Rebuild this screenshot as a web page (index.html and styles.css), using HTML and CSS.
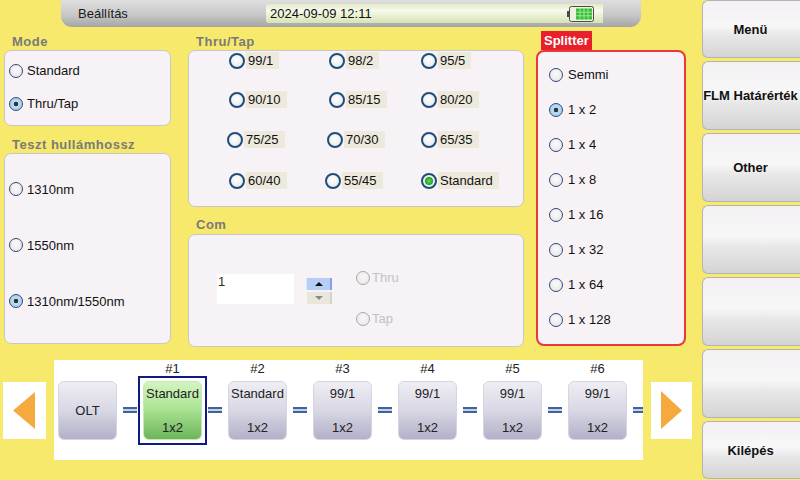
FILE: index.html
```html
<!DOCTYPE html>
<html>
<head>
<meta charset="utf-8">
<title>Beállítás</title>
<link rel="stylesheet" href="styles.css">
</head>
<body>
<div class="app">
  <div class="main">
    <div class="titlebar">
      <span class="title">Beállítás</span>
      <div class="datefield">
        <span>2024-09-09 12:11</span>
        <svg class="battery" width="28" height="16" viewBox="0 0 28 16">
          <rect x="1" y="5" width="2.5" height="6" fill="#4a4a4a"/>
          <rect x="3.5" y="0.5" width="24" height="15" rx="2" fill="#eef2dc" stroke="#4a4a4a"/>
          <rect x="10" y="2.5" width="16" height="11" fill="#34c034"/>
          <path d="M14 2.5V13.5M18 2.5V13.5M22 2.5V13.5M10 6.2H26M10 9.8H26" stroke="#b8ecb0" stroke-width="0.8"/>
        </svg>
      </div>
    </div>

    <div class="content">
      <div class="col col1">
        <div class="label">Mode</div>
        <div class="panel mode">
          <div class="opt"><span class="rb"></span>Standard</div>
          <div class="opt"><span class="rb on"></span>Thru/Tap</div>
        </div>
        <div class="label gap">Teszt hullámhossz</div>
        <div class="panel wave">
          <div class="opt"><span class="rb"></span>1310nm</div>
          <div class="opt"><span class="rb"></span>1550nm</div>
          <div class="opt"><span class="rb on"></span>1310nm/1550nm</div>
        </div>
      </div>

      <div class="col col2">
        <div class="label">Thru/Tap</div>
        <div class="panel ratios">
          <div class="ropt"><span class="rt"></span><span class="tx">99/1</span></div>
          <div class="ropt"><span class="rt"></span><span class="tx">98/2</span></div>
          <div class="ropt"><span class="rt"></span><span class="tx">95/5</span></div>
          <div class="ropt"><span class="rt"></span><span class="tx">90/10</span></div>
          <div class="ropt"><span class="rt"></span><span class="tx">85/15</span></div>
          <div class="ropt"><span class="rt"></span><span class="tx">80/20</span></div>
          <div class="ropt shift"><span class="rt"></span><span class="tx">75/25</span></div>
          <div class="ropt shift"><span class="rt"></span><span class="tx">70/30</span></div>
          <div class="ropt"><span class="rt"></span><span class="tx">65/35</span></div>
          <div class="ropt"><span class="rt"></span><span class="tx">60/40</span></div>
          <div class="ropt shift2"><span class="rt"></span><span class="tx">55/45</span></div>
          <div class="ropt"><span class="rt on"></span><span class="tx">Standard</span></div>
        </div>
        <div class="label com-label">Com</div>
        <div class="panel com">
          <div class="numfield">1</div>
          <div class="spin">
            <div class="spin-up"><span class="tri-up"></span></div>
            <div class="spin-down"><span class="tri-down"></span></div>
          </div>
          <div class="dis-opts">
            <div class="dopt"><span class="rb dis"></span>Thru</div>
            <div class="dopt"><span class="rb dis"></span>Tap</div>
          </div>
        </div>
      </div>

      <div class="col col3">
        <div class="splabel">Splitter</div>
        <div class="panel splitter">
          <div class="sopt"><span class="rb"></span>Semmi</div>
          <div class="sopt"><span class="rb on"></span>1 x 2</div>
          <div class="sopt"><span class="rb"></span>1 x 4</div>
          <div class="sopt"><span class="rb"></span>1 x 8</div>
          <div class="sopt"><span class="rb"></span>1 x 16</div>
          <div class="sopt"><span class="rb"></span>1 x 32</div>
          <div class="sopt"><span class="rb"></span>1 x 64</div>
          <div class="sopt"><span class="rb"></span>1 x 128</div>
        </div>
      </div>
    </div>

    <div class="chain">
      <div class="arrow left">
        <svg width="43" height="57" viewBox="0 0 43 57"><polygon points="10,28.5 32,10 32,47" fill="#f6a93f"/></svg>
      </div>
      <div class="track">
        <div class="node-col"><div class="nlabel"></div><div class="node single">OLT</div></div>
        <div class="link"></div>
        <div class="node-col"><div class="nlabel">#1</div><div class="selframe"><div class="node sel"><span>Standard</span><span>1x2</span></div></div></div>
        <div class="link"></div>
        <div class="node-col"><div class="nlabel">#2</div><div class="node"><span>Standard</span><span>1x2</span></div></div>
        <div class="link"></div>
        <div class="node-col"><div class="nlabel">#3</div><div class="node"><span>99/1</span><span>1x2</span></div></div>
        <div class="link"></div>
        <div class="node-col"><div class="nlabel">#4</div><div class="node"><span>99/1</span><span>1x2</span></div></div>
        <div class="link"></div>
        <div class="node-col"><div class="nlabel">#5</div><div class="node"><span>99/1</span><span>1x2</span></div></div>
        <div class="link"></div>
        <div class="node-col"><div class="nlabel">#6</div><div class="node"><span>99/1</span><span>1x2</span></div></div>
        <div class="link"></div>
      </div>
      <div class="arrow right">
        <svg width="41" height="57" viewBox="0 0 41 57"><polygon points="31,28.5 10,9 10,47" fill="#f6a93f"/></svg>
      </div>
    </div>
  </div>

  <div class="side">
    <div class="btn short">Menü</div>
    <div class="btn">FLM Határérték</div>
    <div class="btn">Other</div>
    <div class="btn"></div>
    <div class="btn"></div>
    <div class="btn"></div>
    <div class="btn short">Kilépés</div>
  </div>
</div>
</body>
</html>
```

FILE: styles.css
```css
* { box-sizing: border-box; margin: 0; padding: 0; }
html, body { width: 800px; height: 480px; overflow: hidden; }
body {
  background: #f6e96c;
  font-family: "Liberation Sans", Arial, sans-serif;
  font-size: 13px;
  color: #111;
}
.app { display: flex; height: 480px; }
.main { width: 702px; flex: none; display: flex; flex-direction: column; }

/* title bar */
.titlebar {
  margin-left: 61px;
  width: 580px;
  height: 27px;
  border-radius: 0 0 11px 11px;
  background: linear-gradient(#dedede, #c8c8c8 55%, #a4a4a4);
  display: flex;
  align-items: center;
  padding-left: 17px;
}
.title { flex: 1; color: #1a1a1a; }
.datefield {
  width: 337px;
  height: 19px;
  margin-right: 38px;
  border-radius: 3px 0 0 3px;
  background: linear-gradient(#e2ebc6, #f7faee 35%, #e7f0d0 65%, #d6e3b4);
  display: flex;
  align-items: center;
  justify-content: space-between;
  padding: 0 9px 0 4px;
}
.battery { display: block; }

/* content columns */
.content { display: flex; padding-left: 4px; height: 320px; }
.col { display: flex; flex-direction: column; padding-top: 7px; }
.col1 { width: 167px; }
.col2 { width: 336px; margin-left: 17px; }
.col3 { width: 150px; margin-left: 12px; padding-top: 4px; }

.label {
  height: 16px;
  line-height: 16px;
  font-weight: bold;
  color: #7a7a7a;
  padding-left: 8px;
  letter-spacing: 0.5px;
}
.label.gap { margin-top: 11px; }
.label.com-label { margin-top: 10px; }

.panel {
  background: #f6f2f6;
  border: 1px solid #c8c8c8;
  border-radius: 7px;
}

/* radios */
.rb {
  flex: none;
  width: 14px;
  height: 14px;
  border-radius: 50%;
  border: 1px solid #34457a;
  background: radial-gradient(circle at 50% 40%, #fbfbfb, #e2e2e2);
  margin-right: 4px;
}
.rb.on {
  background: radial-gradient(circle, #333 0, #333 2px, #bcdff4 2.6px, #a6d0ee 6px);
}
.rb.dis {
  border-color: #a8a8a8;
  background: radial-gradient(circle at 50% 40%, #f6f6f6, #e8e8e8);
}

.mode { height: 76px; padding: 3px 0 0 4px; }
.wave { height: 191px; padding: 7px 0 0 4px; }
.opt { display: flex; align-items: center; height: 33px; }
.wave .opt { height: 56px; }

/* thru/tap ratios */
.ratios {
  height: 157px;
  display: grid;
  grid-template-columns: 100px 92px 1fr;
  grid-template-rows: 39px 40px 41px 17px;
  padding: 1px 0 0 40px;
}
.ropt { display: flex; align-items: center; height: 17px; }
.ropt.shift { margin-left: -2px; }
.ropt.shift2 { margin-left: -4px; }
.rt {
  flex: none;
  width: 16px;
  height: 16px;
  border-radius: 50%;
  border: 2px solid #1d4d7d;
  background: radial-gradient(circle at 45% 40%, #ffffff, #e4e4e4);
}
.rt.on {
  background: radial-gradient(circle, #6ad86a 0, #22a622 3.6px, #f4f4f4 4.6px, #e6e6e6);
}
.tx {
  height: 17px;
  line-height: 17px;
  background: #ede9dd;
  padding: 0 6px 0 2px;
  margin-left: 1px;
}

/* com */
.com {
  height: 113px;
  margin-top: 1px;
  display: flex;
  align-items: flex-start;
  padding: 35px 0 0 28px;
}
.numfield {
  width: 77px;
  height: 30px;
  margin-top: 4px;
  background: #fff;
  line-height: 16px;
  padding-left: 1px;
  color: #3a2a10;
}
.spin { width: 26px; margin: 8px 0 0 12px; display: flex; flex-direction: column; gap: 2px; }
.spin-up, .spin-down {
  height: 12px;
  display: flex;
  align-items: center;
  justify-content: center;
}
.spin-up { background: #b6cef7; border-right: 2px solid #86a2e6; border-left: 1px solid #dfe8fb; }
.spin-down { background: #e9e7db; border-right: 2px solid #d6d4c6; border-left: 1px solid #f4f3ec; }
.tri-up { width: 0; height: 0; border-left: 4px solid transparent; border-right: 4px solid transparent; border-bottom: 4px solid #111; }
.tri-down { width: 0; height: 0; border-left: 4px solid transparent; border-right: 4px solid transparent; border-top: 4px solid #8a8a8a; }
.dis-opts { margin-left: 24px; display: flex; flex-direction: column; gap: 26px; }
.dopt { display: flex; align-items: center; height: 15px; color: #c2c2c2; }
.dopt .rb { margin-right: 2px; }

/* splitter */
.splabel {
  align-self: flex-start;
  margin-left: 5px;
  height: 19px;
  line-height: 19px;
  padding: 0 3px;
  background: #e8202c;
  color: #fff;
  font-weight: bold;
}
.splitter {
  height: 296px;
  border: 2px solid #e8383c;
  border-radius: 8px;
  padding: 5px 0 0 11px;
}
.sopt { display: flex; align-items: center; height: 35px; }
.sopt .rb { margin-right: 5px; }

/* chain */
.chain {
  margin-top: 13px;
  height: 100px;
  display: flex;
  align-items: center;
  gap: 8px;
  padding-left: 3px;
}
.arrow { background: #fff; height: 57px; }
.arrow svg { display: block; }
.arrow.left { width: 43px; }
.arrow.right { width: 41px; }
.track {
  width: 589px;
  height: 100px;
  background: #fff;
  display: flex;
  align-items: flex-start;
  padding: 2px 0 0 4px;
  overflow: hidden;
}
.node-col { flex: 0 0 59px; display: flex; flex-direction: column; align-items: center; }
.nlabel { height: 14px; line-height: 14px; margin-bottom: 5px; color: #222; }
.node {
  flex: none;
  width: 59px;
  height: 59px;
  border-radius: 6px;
  border: 1px solid #d6d6e2;
  background: linear-gradient(#efeef4, #d8d7e4 50%, #b2b1c9);
  display: flex;
  flex-direction: column;
  align-items: center;
  justify-content: space-between;
  padding: 4px 0;
  line-height: 15px;
  color: #222;
}
.node.single { justify-content: center; }
.selframe {
  flex: none;
  width: 69px;
  height: 69px;
  margin: -5px -5px 0;
  border: 2px solid #0c1c80;
  padding: 3px;
}
.node.sel {
  background: linear-gradient(#d2f4bf, #aee596 45%, #6cb55a);
  border-color: #c6e8b6;
}
.link {
  flex: 0 0 14px;
  height: 6px;
  margin: 45px 6px 0;
  background: linear-gradient(#41619a 0, #41619a 2px, #c4d1e6 2px, #c4d1e6 4px, #41619a 4px, #41619a 6px);
}

/* side menu */
.side { width: 98px; flex: none; display: flex; flex-direction: column; gap: 3px; }
.btn {
  height: 69px;
  flex: none;
  border: 1px solid #b4b4b4;
  border-right: none;
  border-radius: 6px 0 0 6px;
  background: linear-gradient(#f3f1f3, #f8f7f8 45%, #e8e7e8 62%, #d4d4d4);
  display: flex;
  align-items: center;
  justify-content: center;
  font-weight: bold;
  padding-right: 2px;
  white-space: nowrap;
  overflow: hidden;
}
.btn.short { height: 58px; }
```
